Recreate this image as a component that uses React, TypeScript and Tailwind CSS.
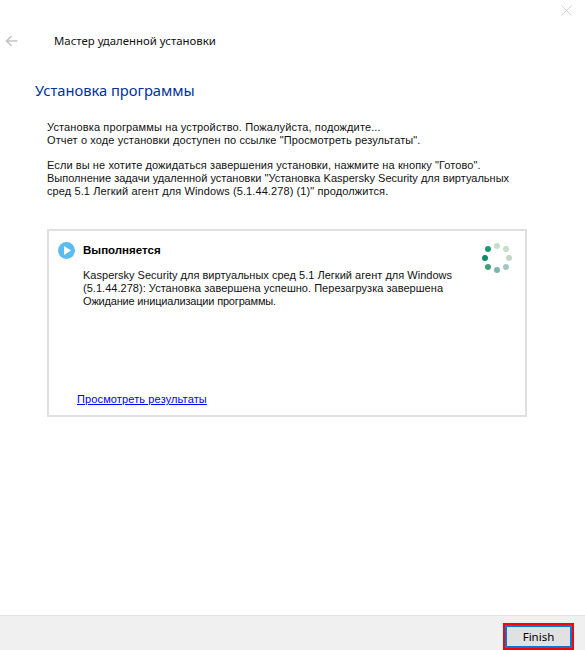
export default function App() {
  const dots = [
    { cx: 12, cy: 3, fill: "#c3dfc6" },
    { cx: 21, cy: 6, fill: "#c3dfc6" },
    { cx: 24, cy: 15, fill: "#c4d6c6" },
    { cx: 21, cy: 24, fill: "#a5c6c0" },
    { cx: 12, cy: 27, fill: "#7fb4ad" },
    { cx: 3, cy: 24, fill: "#3fa27c" },
    { cx: 0, cy: 15, fill: "#0f8a66" },
    { cx: 3, cy: 6, fill: "#1a9a6c" },
  ];

  return (
    <div className="flex h-[650px] w-[585px] flex-col overflow-hidden bg-white font-['Noto_Sans',sans-serif] text-[#000]">
      <div className="flex h-[22px] justify-end pt-[5px] pr-[13px]">
        <svg width="11" height="11" viewBox="0 0 11 11" stroke="#d0d0d0" strokeWidth="1">
          <path d="M0.5 0.5 L10.5 10.5 M10.5 0.5 L0.5 10.5" />
        </svg>
      </div>

      <div className="flex h-[38px] items-center pl-[5px]">
        <svg width="13" height="12" viewBox="0 0 13 12" fill="none" stroke="#c4c4c4" strokeWidth="1.6" className="mt-[-1px]">
          <path d="M12.5 6 H1.5 M6.5 1 L1.5 6 L6.5 11" />
        </svg>
        <span className="ml-[36px] text-[11.4px] text-[#111]">Мастер удаленной установки</span>
      </div>

      <main className="flex-1 pl-[35px]">
        <h1 className="mt-[19px] text-[14.7px] leading-[22px] text-[#003399]">Установка программы</h1>

        <div className="mt-[20px] ml-[12px] w-[480px] font-['Liberation_Sans',sans-serif] text-[11px] leading-[13px] text-[#111]">
          <p className="tracking-[0.13px]">Установка программы на устройство. Пожалуйста, подождите...</p>
          <p className="tracking-[0.12px]">Отчет о ходе установки доступен по ссылке "Просмотреть результаты".</p>
          <p className="mt-[12px] tracking-[0.09px]">
            Если вы не хотите дожидаться завершения установки, нажмите на кнопку "Готово".
          </p>
          <p className="tracking-[0.01px]">Выполнение задачи удаленной установки "Установка Kaspersky Security для виртуальных</p>
          <p className="tracking-[0.1px]">сред 5.1 Легкий агент для Windows (5.1.44.278) (1)" продолжится.</p>
        </div>

        <section className="mt-[31px] ml-[12px] flex h-[188px] w-[480px] flex-col border-2 border-[#e0e0e0] pt-[11px] pr-[13px] pb-[9px] pl-[9px] font-['Liberation_Sans',sans-serif] text-[11px] leading-[13px] text-[#111]">
          <div className="flex flex-1 justify-between">
            <div>
              <div className="flex items-center gap-[8px]">
                <svg width="17" height="17" viewBox="0 0 17 17">
                  <circle cx="8.5" cy="8.5" r="8.5" fill="#5cbcf2" />
                  <path d="M6 4 L13 8.5 L6 13 Z" fill="#fff" />
                </svg>
                <span className="text-[11.5px] font-bold text-black">Выполняется</span>
              </div>
              <div className="mt-[10px] ml-[25px] w-[395px]">
                <p className="tracking-[0.02px]">Kaspersky Security для виртуальных сред 5.1 Легкий агент для Windows</p>
                <p className="tracking-[0.03px]">(5.1.44.278): Установка завершена успешно. Перезагрузка завершена</p>
                <p className="tracking-[-0.18px]">Ожидание инициализации программы.</p>
              </div>
            </div>
            <svg width="30" height="32" viewBox="-3 0 30 32" className="mt-[1px]">
              {dots.map((d) => (
                <circle key={d.cx + "-" + d.cy} cx={d.cx} cy={d.cy} r="3" fill={d.fill} />
              ))}
            </svg>
          </div>
          <a href="#" className="ml-[19px] tracking-[0.13px] text-[#0000ff] underline">
            Просмотреть результаты
          </a>
        </section>
      </main>

      <footer className="flex h-[35px] items-center justify-end border-t border-[#e3e3e3] bg-[#f0f0f0] pr-[11px]">
        <div className="mt-[6px] border-2 border-[#ff0000]">
          <button className="block h-[23px] w-[67px] border-2 border-[#0078d7] bg-[#e1e1e1] font-['Noto_Sans',sans-serif] text-[11.5px] leading-[17px] text-black">
            Finish
          </button>
        </div>
      </footer>
    </div>
  );
}
